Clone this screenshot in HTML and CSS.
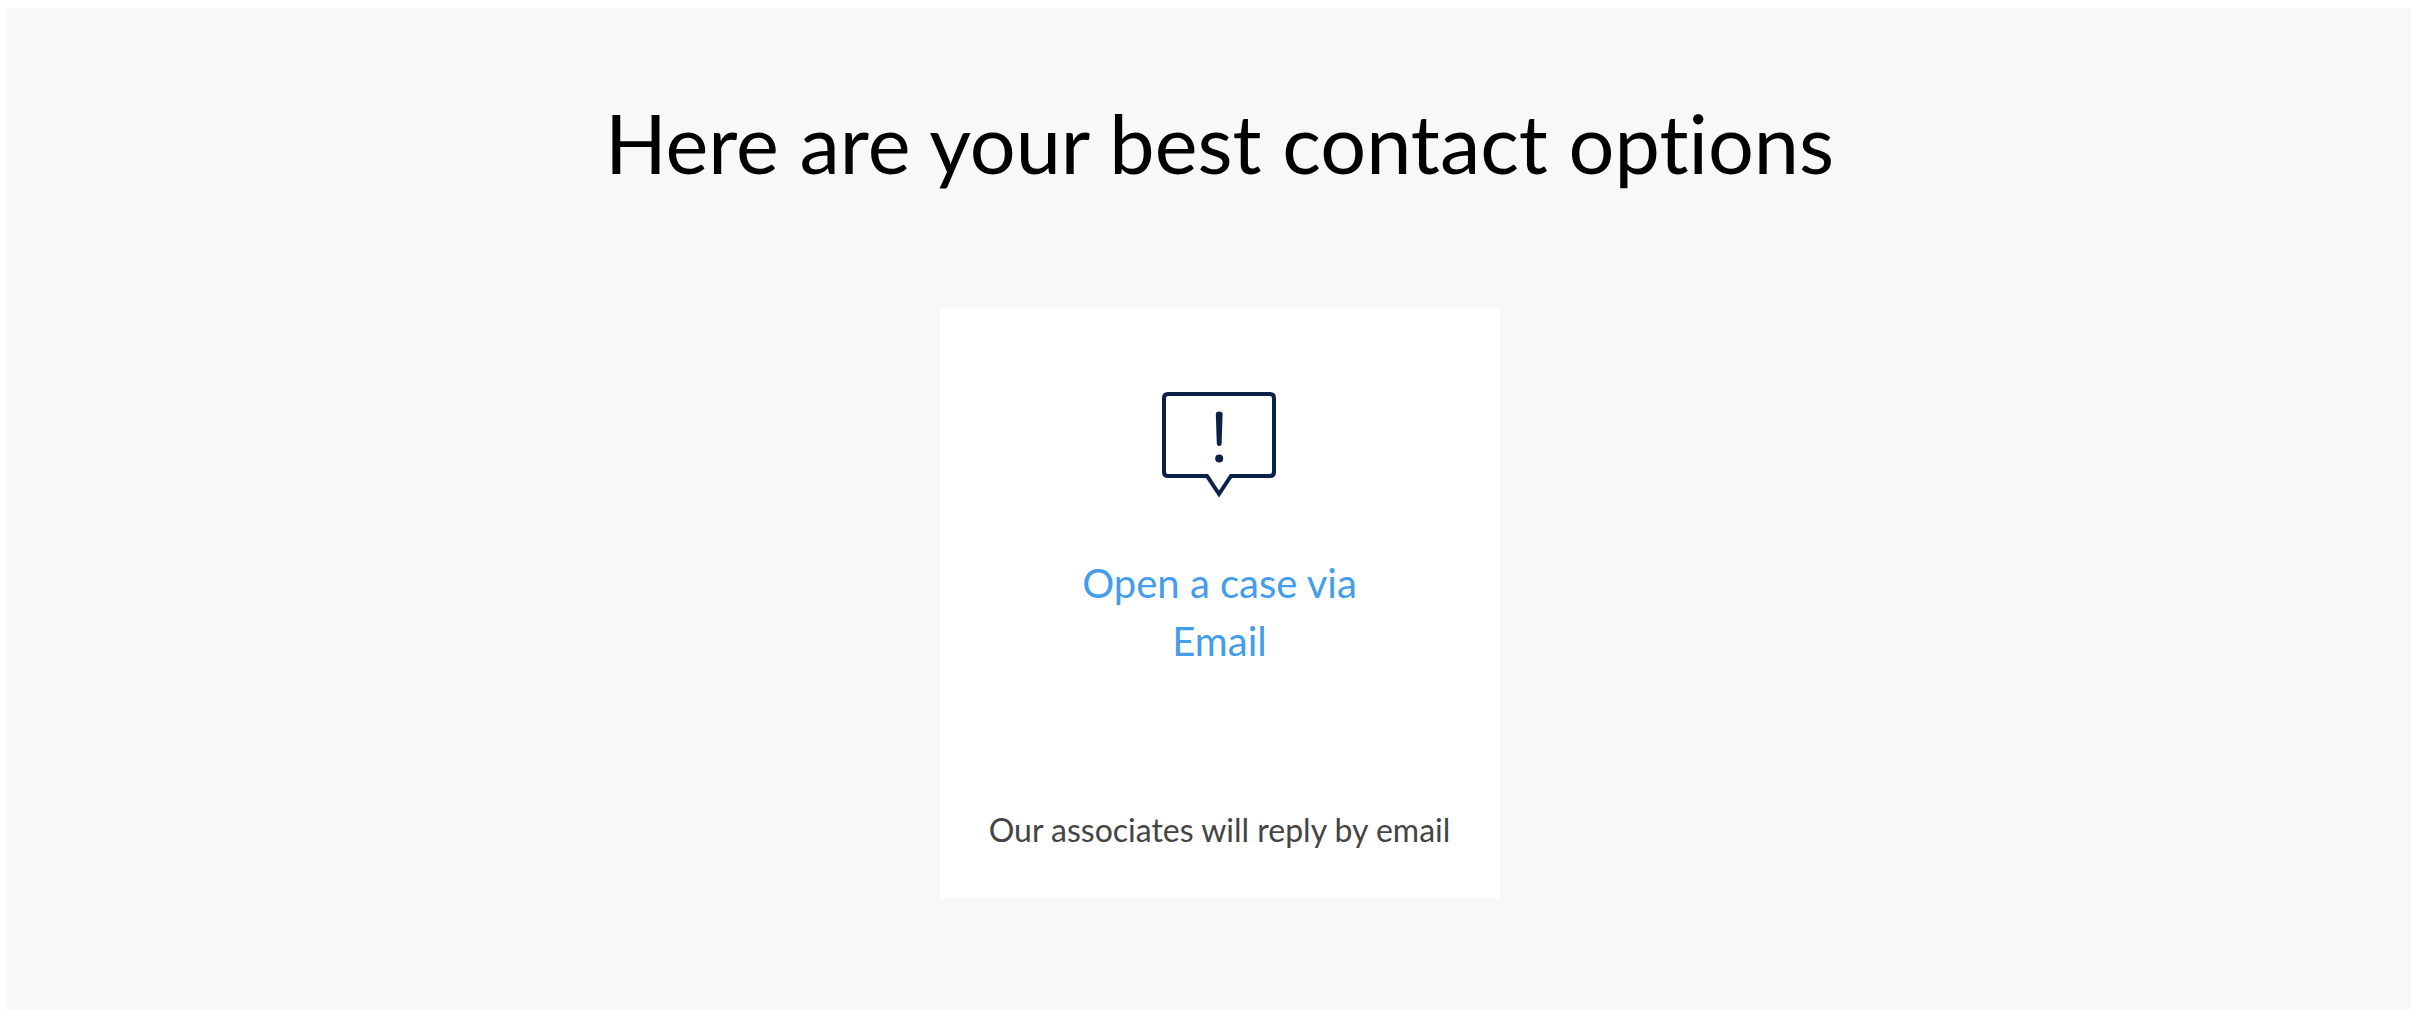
FILE: index.html
```html
<!DOCTYPE html>
<html lang="en">
<head>
  <meta charset="utf-8">
  <meta name="viewport" content="width=device-width, initial-scale=1">
  <title>Contact options</title>
  <link rel="stylesheet" href="styles.css">
</head>
<body>
  <main class="contact">
    <h1 class="contact-title">Here are your best contact options</h1>
    <section class="card">
      <svg class="card-icon" viewBox="0 0 116 108" aria-hidden="true">
        <path class="bubble" d="M6 3H108Q112 3 112 7V81Q112 85 108 85H69L57 103L45 85H6Q2 85 2 81V7Q2 3 6 3Z"/>
        <path class="mark" d="M53.800 23Q53.800 20.500 57.200 20.500T60.600 23L59.600 53Q59.400 55 57.200 55T54.800 53Z"/>
        <circle class="mark" cx="57.200" cy="67.500" r="4"/>
      </svg>
      <a class="card-link" href="#email">Open a case via Email</a>
      <p class="card-note">Our associates will reply by email</p>
    </section>
  </main>
</body>
</html>
```
FILE: styles.css
```css
* {
  box-sizing: border-box;
}

body {
  display: flex;
  min-height: 100vh;
  margin: 0;
  padding: 8px 7px 10px 6px;
  background: #fff;
  font-family: Lato, "Open Sans", sans-serif;
  font-variant-ligatures: none;
}

.contact {
  flex: 1;
  display: flex;
  flex-direction: column;
  align-items: center;
  padding: 75px 0 40px 22px;
  background: #f8f8f8;
}

.contact-title {
  margin: 0 0 106px;
  color: #000;
  font-size: 81px;
  font-weight: 400;
  line-height: 120px;
  text-align: center;
}

.card {
  display: flex;
  flex-direction: column;
  align-items: center;
  width: 560px;
  max-width: 100%;
  min-height: 589px;
  padding: 82px 40px 38px;
  background: #fff;
  text-align: center;
}

.card-icon {
  width: 116px;
  height: 108px;
  margin-bottom: 55px;
}

.bubble {
  fill: none;
  stroke: #0b2148;
  stroke-width: 4;
}

.mark {
  fill: #0b2148;
}

.card-link {
  max-width: 320px;
  color: #439deb;
  font-size: 40px;
  line-height: 58px;
  text-decoration: none;
}

.card-note {
  margin: auto 0 0;
  color: #444;
  font-size: 32px;
  line-height: 60px;
  white-space: nowrap;
}
```
